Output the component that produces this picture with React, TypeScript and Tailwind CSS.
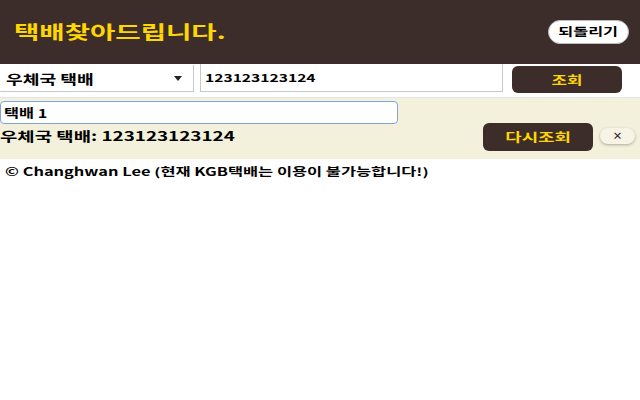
import { useState } from "react"
import type { ReactNode } from "react"

const font = { fontFamily: '"Noto Sans CJK KR", "Noto Sans", sans-serif' }

// the page text is drawn wide, so stretch each label horizontally
function Wide({ children, className = "" }: { children: ReactNode; className?: string }) {
  return <span className={`inline-block whitespace-nowrap ${className}`}>{children}</span>
}

export default function App() {
  const [company, setCompany] = useState("우체국 택배")
  const [invoice, setInvoice] = useState("123123123124")
  const [label, setLabel] = useState("택배 1")

  return (
    <div className="min-h-screen bg-white text-black" style={font}>
      {/* Header */}
      <div className="h-16 bg-[#3d2d2a] flex items-center justify-between pl-[14px] pr-[11px]">
        <h1 className="text-[18px] font-bold text-[#ffd700] leading-none pb-[3px]">
          <Wide className="origin-left scale-x-[1.53]">택배찾아드립니다.</Wide>
        </h1>
        <button className="w-[81px] h-6 rounded-full bg-white border border-[#bbb] text-black text-[11.5px] font-bold leading-none">
          <Wide className="scale-x-[1.41]">되돌리기</Wide>
        </button>
      </div>

      {/* Search row */}
      <div className="flex items-start h-[33px]">
        <div className="relative w-[194px] h-[27px] mt-[1px] border border-[#c8c8c8] border-t-0 border-l-0 bg-white flex items-center pl-[6px]">
          <select
            value={company}
            onChange={(e) => setCompany(e.target.value)}
            className="absolute inset-0 opacity-0 cursor-pointer"
          >
            <option>우체국 택배</option>
            <option>CJ대한통운</option>
            <option>한진택배</option>
            <option>로젠택배</option>
          </select>
          <span className="text-[13px] font-bold leading-none">
            <Wide className="origin-left scale-x-[1.4]">{company}</Wide>
          </span>
          <svg className="absolute right-[11px] top-[11px]" width="8" height="5" viewBox="0 0 8 5">
            <path d="M0 0h8L4 5z" fill="#222" />
          </svg>
        </div>
        <div className="relative ml-[6px] w-[303px] h-[28px] border border-[#c8c8c8] border-t-0 bg-white flex items-center pl-[4px]">
          <input
            value={invoice}
            onChange={(e) => setInvoice(e.target.value)}
            className="absolute inset-0 opacity-0"
          />
          <span className="text-[11px] font-semibold leading-none">
            <Wide className="origin-left scale-x-[1.42]">{invoice}</Wide>
          </span>
        </div>
        <button className="ml-[9px] mt-[2px] w-[110px] h-[27px] rounded-[6px] bg-[#3d2d2a] text-[#ffd700] text-[12px] font-bold leading-none">
          <Wide className="scale-x-[1.4]">조회</Wide>
        </button>
      </div>

      {/* Result */}
      <div className="bg-[#f3f1dc] h-[62px] pt-[3px] border-t border-[#e4e4e4]">
        <div className="relative w-[398px] h-[23px] bg-white border border-[#7ea6dc] rounded-[4px] flex items-center pl-[3px]">
          <input
            value={label}
            onChange={(e) => setLabel(e.target.value)}
            className="absolute inset-0 opacity-0"
          />
          <span className="text-[12px] font-bold leading-none">
            <Wide className="origin-left scale-x-[1.36]">{label}</Wide>
          </span>
        </div>
        <div className="flex items-center mt-[-1px]">
          <span className="flex-1 text-[13px] font-bold leading-none pb-[4px]">
            <Wide className="origin-left scale-x-[1.45]">우체국 택배: 123123123124</Wide>
          </span>
          <button className="w-[110px] h-[28px] rounded-[6px] bg-[#3d2d2a] text-[#ffd700] text-[12px] font-bold leading-none">
            <Wide className="scale-x-[1.49]">다시조회</Wide>
          </button>
          <button className="ml-[7px] mr-[5px] w-[35px] h-[16px] mb-[2px] rounded-full bg-[#f7f4e6] shadow-[0_1px_3px_rgba(0,0,0,0.3)] text-[10px] font-bold leading-none text-[#222]">
            ×
          </button>
        </div>
      </div>

      {/* Footer */}
      <p className="pl-[5px] pt-[7px] text-[11px] font-bold leading-none">
        <Wide className="origin-left scale-x-[1.49]">© Changhwan Lee (현재 KGB택배는 이용이 불가능합니다!)</Wide>
      </p>
    </div>
  )
}
